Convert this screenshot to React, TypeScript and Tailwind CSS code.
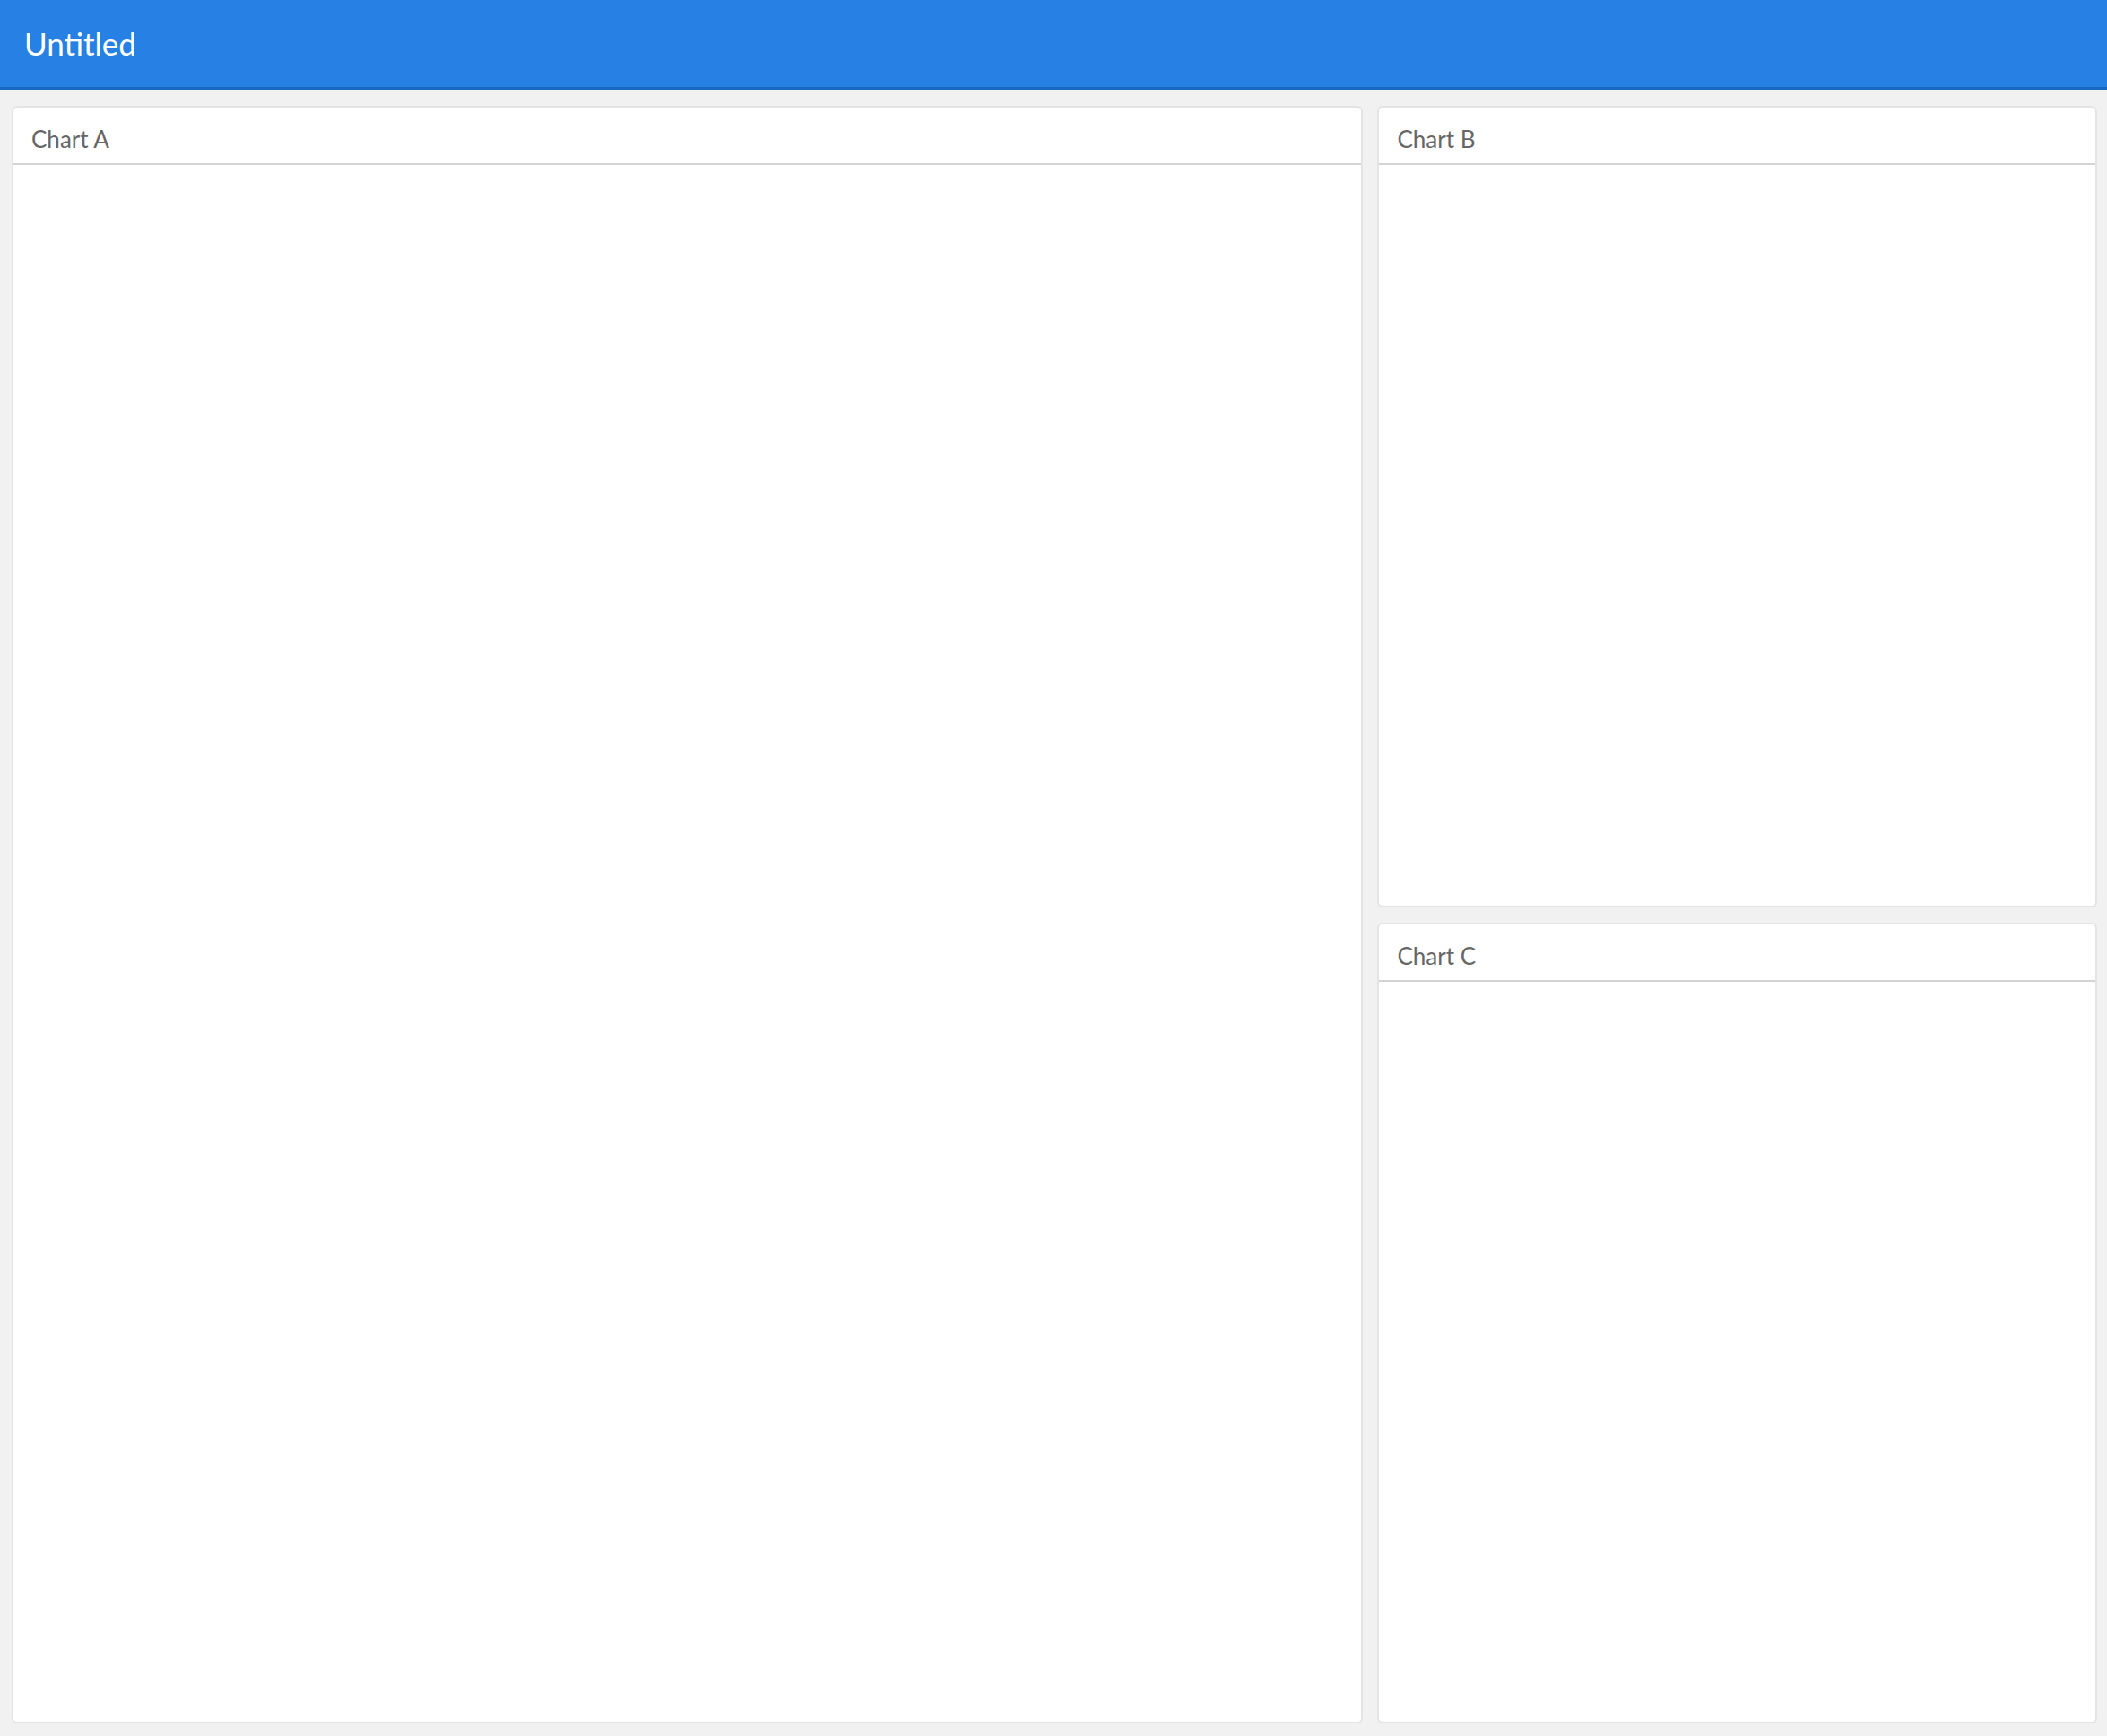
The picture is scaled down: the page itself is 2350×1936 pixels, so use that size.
import React from 'react';

const font = { fontFamily: 'Lato, "Open Sans", sans-serif' };

function ChartCard({ title, className = '' }: { title: string; className?: string }) {
  return (
    <div className={`flex flex-col bg-white border-2 border-[#e4e4e4] rounded-[6px] overflow-hidden ${className}`}>
      <div className="h-[64px] shrink-0 pl-[20px] pt-[20px] border-b-2 border-[#d4d4d4]">
        <div className="text-[26px] leading-[31px] text-[#666666]">{title}</div>
      </div>
      <div className="flex-1" />
    </div>
  );
}

export default function App() {
  return (
    <div className="h-screen w-full flex flex-col bg-[#f1f1f1]" style={font}>
      <header className="h-[100px] shrink-0 bg-[#2780e3] border-b-[3px] border-[#1b68c0] flex items-center pl-[27px]">
        <span className="text-[35px] text-white leading-none">Untitled</span>
      </header>

      <main className="flex-1 min-h-0 flex gap-[16px] pt-[18px] pl-[13px] pr-[11px] pb-[14px]">
        <ChartCard title="Chart A" className="flex-[1506] min-w-0" />
        <div className="flex-[804] min-w-0 flex flex-col gap-[17px]">
          <ChartCard title="Chart B" className="flex-1" />
          <ChartCard title="Chart C" className="flex-1" />
        </div>
      </main>
    </div>
  );
}
